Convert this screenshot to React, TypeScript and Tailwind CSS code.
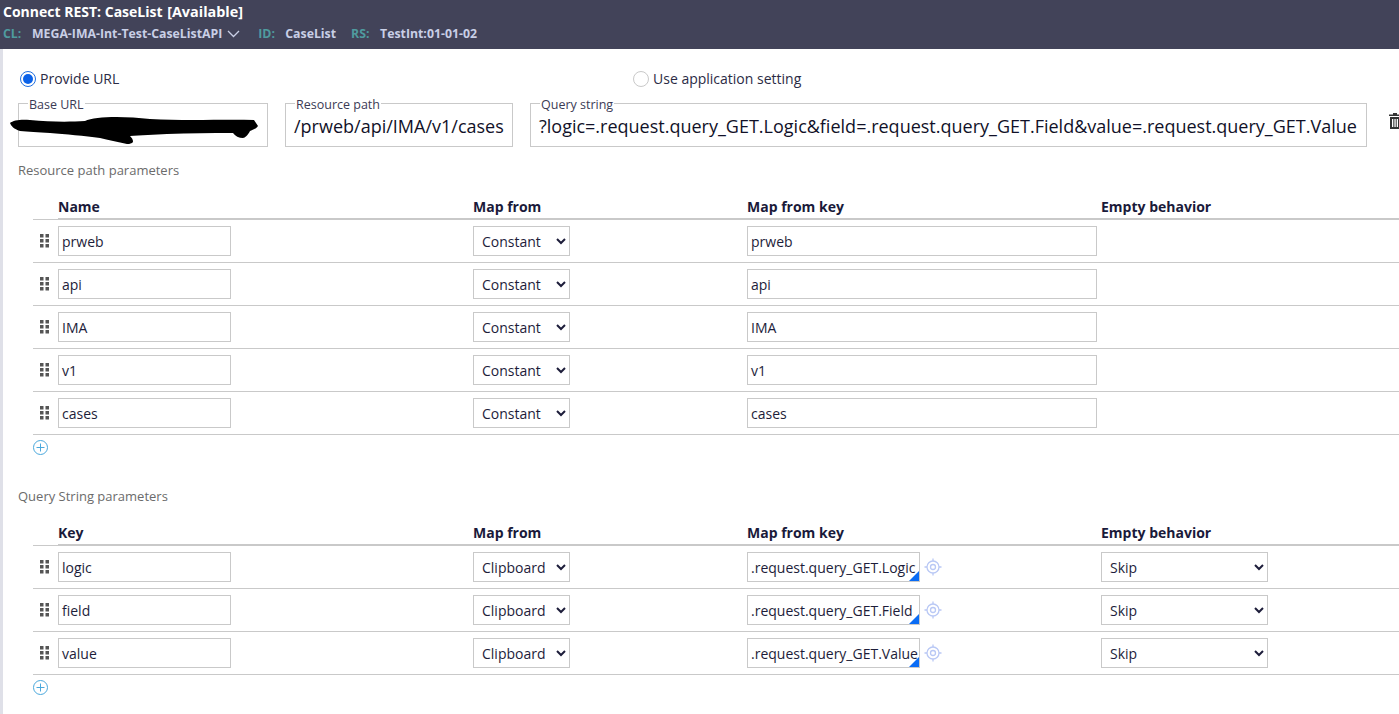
import React from 'react';

const pathRows = ['prweb', 'api', 'IMA', 'v1', 'cases'];
const queryRows = [
  { key: 'logic', from: '.request.query_GET.Logic' },
  { key: 'field', from: '.request.query_GET.Field' },
  { key: 'value', from: '.request.query_GET.Value' },
];

const colGrid = 'grid grid-cols-[25px_415px_274px_354px_1fr]';

function DragHandle() {
  return (
    <svg width="9" height="14" viewBox="0 0 9 14" className="ml-[7px] fill-[#555]">
      <rect x="0" y="0" width="3.5" height="3.5" />
      <rect x="5.5" y="0" width="3.5" height="3.5" />
      <rect x="0" y="5" width="3.5" height="3.5" />
      <rect x="5.5" y="5" width="3.5" height="3.5" />
      <rect x="0" y="10" width="3.5" height="3.5" />
      <rect x="5.5" y="10" width="3.5" height="3.5" />
    </svg>
  );
}

function AddButton() {
  return (
    <svg width="15" height="15" viewBox="0 0 15 15" fill="none" className="stroke-[#4aa8dc]">
      <circle cx="7.5" cy="7.5" r="7" />
      <path d="M7.5 3.5v8M3.5 7.5h8" />
    </svg>
  );
}

function Target() {
  return (
    <svg width="18" height="18" viewBox="0 0 18 18" fill="none" className="ml-[4px] stroke-[#b9c8f5]">
      <circle cx="9" cy="9" r="6" strokeWidth="1.3" />
      <circle cx="9" cy="9" r="2.5" strokeWidth="1.3" />
      <path d="M9 0.5v2.5M9 15v2.5M0.5 9H3M15 9h2.5" strokeWidth="1.3" />
    </svg>
  );
}

function TextBox({ value, className = '' }: { value: string; className?: string }) {
  return (
    <div className={`h-[30px] border border-[#c9c9c9] bg-white pl-[3px] pt-[1px] text-[14px] leading-[28px] text-[#1d1d3a] overflow-hidden whitespace-nowrap ${className}`}>
      {value}
    </div>
  );
}

function Select({ value, options, width }: { value: string; options: string[]; width: string }) {
  return (
    <select
      defaultValue={value}
      className={`h-[30px] ${width} border border-[#c9c9c9] bg-white pl-[4px] text-[14px] text-[#1d1d3a] rounded-none`}
    >
      {options.map((o) => (
        <option key={o}>{o}</option>
      ))}
    </select>
  );
}

function Legend({ label, className, children }: { label: string; className: string; children?: React.ReactNode }) {
  return (
    <fieldset className={`h-[52px] min-w-0 shrink-0 border border-[#c9c9c9] px-[9px] ${className}`}>
      <legend className="h-[16px] px-[1px] text-[12.5px] leading-[20px] text-[#3b3b55]">{label}</legend>
      <div className="ml-[-1px] pt-[3px] text-[18px] leading-[24px] text-[#111128] whitespace-nowrap">{children}</div>
    </fieldset>
  );
}

function HeaderRow({ first, lastCol }: { first: string; lastCol: string }) {
  return (
    <div className={`${colGrid} h-[24px] text-[14px] font-bold leading-[24px] text-[#1a1a3a] relative`}>
      <div />
      <div>{first}</div>
      <div>Map from</div>
      <div>Map from key</div>
      <div>{lastCol}</div>
    </div>
  );
}

export default function App() {
  return (
    <div className="h-[714px] w-[1399px] overflow-hidden bg-white font-['Open_Sans',sans-serif]">
      <div className="h-[49px] bg-[#424359] pl-[3px]">
        <div className="pt-[1px] text-[14px] font-bold leading-[22px] text-white">
          Connect REST: CaseList <span className="ml-[1px] text-[14.4px]">[Available]</span>
        </div>
        <div className="flex items-center pt-[1px] text-[12.3px] font-bold leading-[20px] text-[#c9cfe6]">
          <span className="text-[#4f9b9f] w-[29px]">CL:</span>
          <span>MEGA-IMA-Int-Test-CaseListAPI</span>
          <svg width="13" height="8" viewBox="0 0 13 8" fill="none" className="ml-[5px] stroke-[#c9cfe6]" strokeWidth="1.3">
            <path d="M1 1l5.500 5.500L12 1" />
          </svg>
          <span className="ml-[18px] w-[27px] text-[#4f9b9f]">ID:</span>
          <span>CaseList</span>
          <span className="ml-[15px] w-[29px] text-[#4f9b9f]">RS:</span>
          <span>TestInt:01-01-02</span>
        </div>
      </div>

      <div className="h-[665px] border-l-[3px] border-[#dfe0e8] pl-[15px]">
        <div className="flex h-[40px] items-end pl-[2px] text-[14px] leading-[20px] text-[#2b2b45]">
          <div className="flex w-[613px] items-center">
            <span className="mr-[4px] flex h-[16px] w-[16px] items-center justify-center rounded-full border border-[#1f6fe0]">
              <span className="h-[10px] w-[10px] rounded-full bg-[#0b62e8]" />
            </span>
            Provide URL
          </div>
          <div className="flex items-center">
            <span className="mr-[4px] h-[16px] w-[16px] rounded-full border border-[#c9c9c9]" />
            Use application setting
          </div>
        </div>

        <div className="mt-[6px] flex items-start">
          <Legend label="Base URL" className="relative w-[250px]">
            <svg width="270" height="40" viewBox="0 110 270 40" className="absolute left-[-19px] top-[-3px] fill-black">
              <path d="M10 125 C13 122 22 121 30 122 C50 124 70 124 85 123 C95 118 125 118 150 121 C190 123 225 121 254 122 L258 128 C256 131 252 132 250 133 C248 137 245 140 243 140 C239 140 235 138 233 135 C210 135 190 135 167 136 C155 137 140 137 130 138 C133 141 134 144 132 145 C130 146 128 146 127 146 C118 144 108 142 100 140 C85 138 65 136 50 135 C38 134 28 134 20 133 C14 131 11 128 10 125 Z" />
            </svg>
          </Legend>
          <Legend label="Resource path" className="ml-[17px] w-[228px]">
            /prweb/api/IMA/v1/cases
          </Legend>
          <Legend label="Query string" className="ml-[17px] w-[837px]">
            ?logic=.request.query_GET.Logic&amp;field=.request.query_GET.Field&amp;value=.request.query_GET.Value
          </Legend>
          <svg width="12" height="16" viewBox="0 0 12 16" className="ml-[22px] mt-[18px] shrink-0 fill-[#333]">
            <path d="M4 0h4v1.500h4V3H0V1.500h4zM1 4h10v12H1zM3 6v8h1.300V6zM5.400 6v8h1.300V6zM7.700 6v8H9V6z" fillRule="evenodd" />
          </svg>
        </div>

        <div className="mt-[14px] text-[13px] leading-[18px] text-[#6b6b6b]">Resource path parameters</div>

        <div className="ml-[15px] mt-[16px]">
          <HeaderRow first="Name" lastCol="Empty behavior" />
          <div className="relative h-[1px] bg-[#c9c9c9]">
            <div className="absolute left-[25px] right-0 top-[-1px] h-[2px] bg-[#c9c9c9]" />
          </div>
          {pathRows.map((r) => (
            <div key={r} className={`${colGrid} h-[43px] items-center border-b border-[#c9c9c9]`}>
              <DragHandle />
              <TextBox value={r} className="w-[173px]" />
              <Select value="Constant" options={['Constant', 'Clipboard']} width="w-[97px]" />
              <TextBox value={r} className="w-[350px]" />
              <div />
            </div>
          ))}
          <div className="flex h-[24px] items-center">
            <AddButton />
          </div>
        </div>

        <div className="mt-[28px] text-[13px] leading-[18px] text-[#6b6b6b]">Query String parameters</div>

        <div className="ml-[15px] mt-[16px]">
          <HeaderRow first="Key" lastCol="Empty behavior" />
          <div className="relative h-[1px] bg-[#c9c9c9]">
            <div className="absolute left-[25px] right-0 top-[-1px] h-[2px] bg-[#c9c9c9]" />
          </div>
          {queryRows.map((r) => (
            <div key={r.key} className={`${colGrid} h-[43px] items-center border-b border-[#c9c9c9]`}>
              <DragHandle />
              <TextBox value={r.key} className="w-[173px]" />
              <Select value="Clipboard" options={['Clipboard', 'Constant']} width="w-[97px]" />
              <div className="flex items-center">
                <div className="relative">
                  <TextBox value={r.from} className="w-[173px]" />
                  <span className="absolute bottom-[1px] right-[1px] h-0 w-0 border-b-[10px] border-l-[10px] border-b-[#0a6cf5] border-l-transparent" />
                </div>
                <Target />
              </div>
              <Select value="Skip" options={['Skip', 'Empty']} width="w-[167px]" />
            </div>
          ))}
          <div className="flex h-[24px] items-center">
            <AddButton />
          </div>
        </div>
      </div>
    </div>
  );
}
